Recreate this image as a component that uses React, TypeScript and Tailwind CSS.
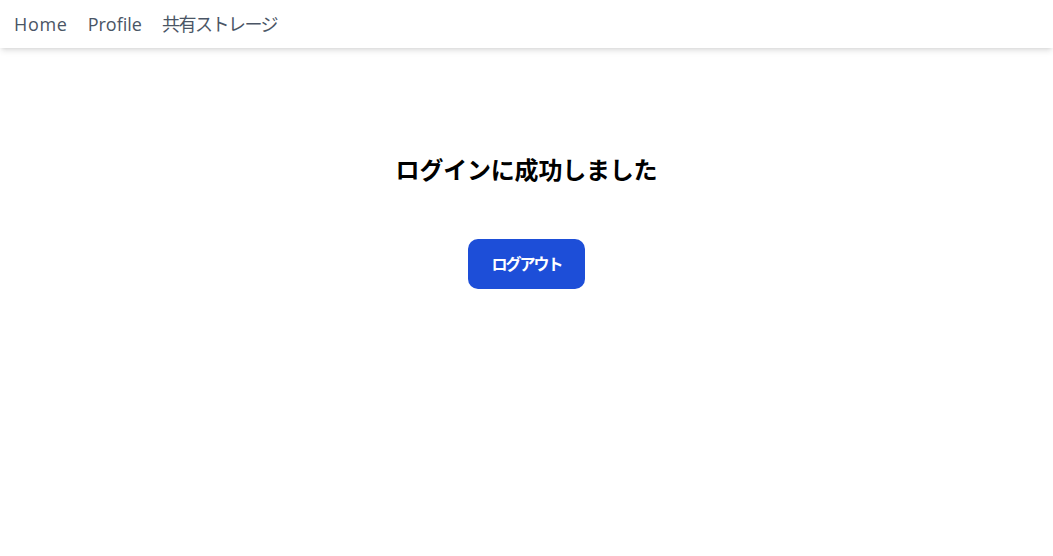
export default function App() {
  return (
    <div className="min-h-screen bg-white" style={{ fontFamily: '"Open Sans", "Noto Sans CJK JP", sans-serif' }}>
      <nav className="h-12 bg-white shadow-md flex items-center gap-5 px-[14px] text-lg text-gray-600">
        <a href="#" className="tracking-[0.7px]">Home</a>
        <a href="#">Profile</a>
        <a href="#" className="tracking-[-1.5px]">共有ストレージ</a>
      </nav>
      <main className="flex flex-col items-center pt-[102px]">
        <h1 className="text-2xl font-bold text-black h-[40px] flex items-center tracking-[-0.2px]">ログインに成功しました</h1>
        <button className="mt-[49px] w-[117px] h-[50px] rounded-[10px] bg-[#1d4ed8] text-white font-bold text-base tracking-[-2px]">
          ログアウト
        </button>
      </main>
    </div>
  );
}
